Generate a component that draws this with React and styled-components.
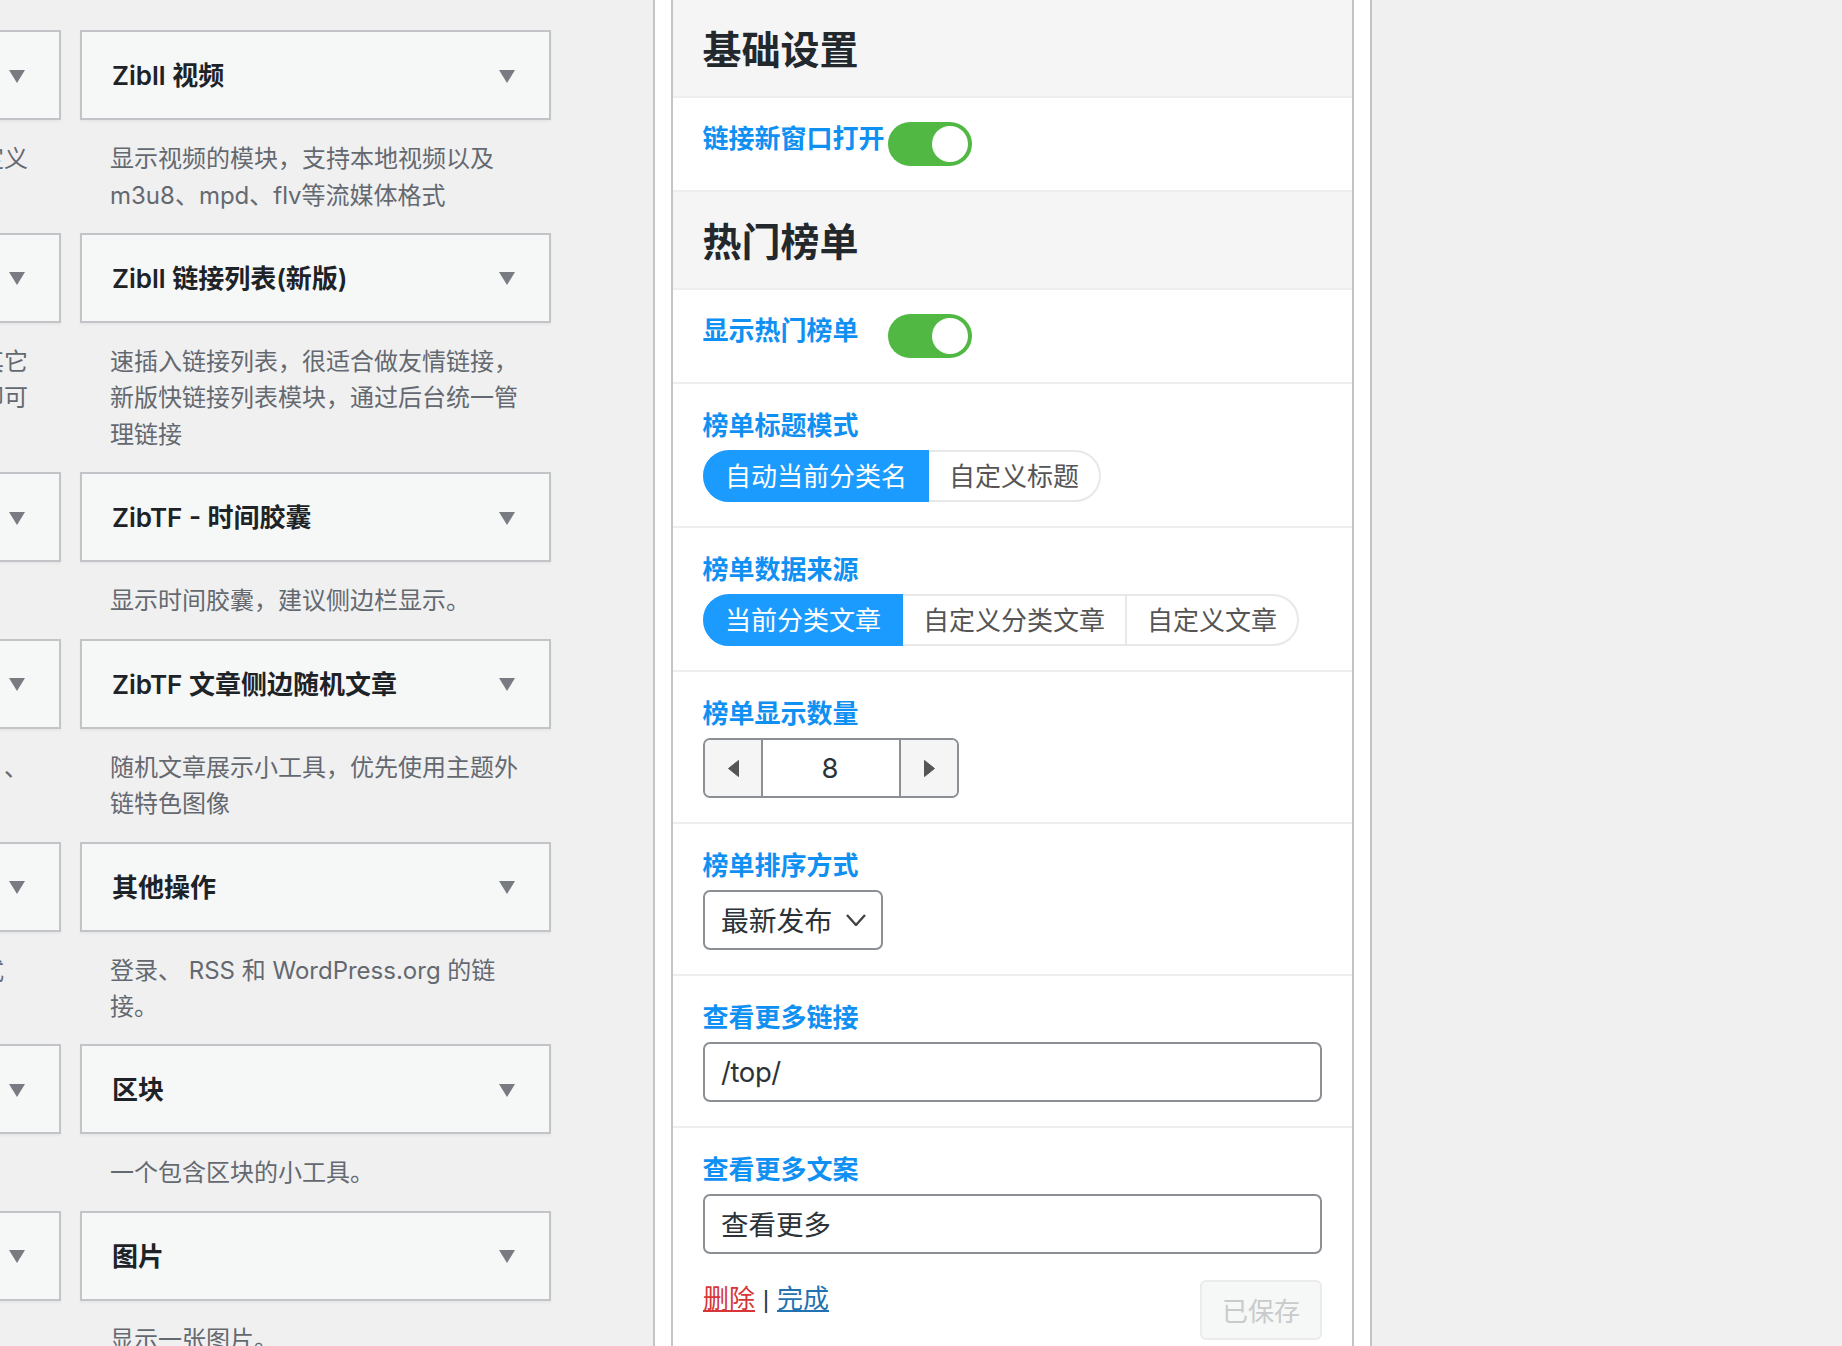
import React from "react";
import styled, { createGlobalStyle } from "styled-components";

const FONT = `Inter, "Noto Sans CJK SC", "Noto Sans", sans-serif`;

const Global = createGlobalStyle`
  html, body { margin: 0; padding: 0; background: #f0f0f1; }
  body { font-family: ${FONT}; }
  * { box-sizing: border-box; }
`;

const Page = styled.div`
  display: flex;
  width: 1842px;
  height: 1346px;
  overflow: hidden;
  background: #f0f0f1;
`;

const WidgetArea = styled.section`
  flex: 0 0 653px;
  height: 100%;
  overflow: hidden;
  padding-top: 30px;
`;

const WidgetGrid = styled.div`
  display: grid;
  grid-template-columns: 471px 471px;
  column-gap: 19px;
  margin-left: -410px;
  width: 961px;
`;

const WidgetItem = styled.div`
  min-width: 0;
`;

const WidgetCard = styled.div`
  display: flex;
  align-items: center;
  justify-content: space-between;
  height: 90px;
  padding: 0 34px 0 30px;
  background: #f6f7f7;
  border: 2px solid #c3c4c7;
  box-shadow: 0 2px 2px rgba(0, 0, 0, 0.04);
`;

const WidgetTitle = styled.h3`
  margin: 0;
  padding-top: 2px;
  font-size: 26px;
  font-weight: 600;
  line-height: 36px;
  color: #1d2327;
`;

const Caret = styled.span`
  flex: none;
  width: 0;
  height: 0;
  margin-top: 2px;
  border-left: 8.5px solid transparent;
  border-right: 8.5px solid transparent;
  border-top: 13px solid #787c82;
`;

const WidgetDesc = styled.p`
  margin: 21px 0 18.9px;
  min-height: 36.5px;
  padding: 0 30px;
  font-size: 24px;
  line-height: 36.5px;
  color: #646970;
  white-space: pre-wrap;
`;

const ClippedDesc = styled(WidgetDesc)`
  padding: 0 33px 0 0;
  text-align: right;
`;

const Sidebar = styled.aside`
  flex: 0 0 719px;
  height: 100%;
  padding: 0 16px;
  background: #fff;
  border-left: 2px solid #c3c4c7;
  border-right: 2px solid #c3c4c7;
`;

const Panel = styled.div`
  height: 100%;
  overflow: hidden;
  background: #fff;
  border-left: 2px solid #c3c4c7;
  border-right: 2px solid #c3c4c7;
`;

const SectionHeading = styled.h2`
  display: flex;
  align-items: center;
  height: 98px;
  margin: 0;
  padding: 0 30px 3px 29.5px;
  background: #f5f5f5;
  border-bottom: 2px solid #eee;
  font-size: 39px;
  font-weight: 700;
  color: #23282d;
`;

const InlineRow = styled.div`
  display: flex;
  align-items: flex-start;
  height: 94px;
  padding: 24px 30px;
  border-bottom: 2px solid #eee;
`;

const StackRow = styled.div`
  display: flex;
  flex-direction: column;
  align-items: flex-start;
  padding: 23px 30px 0;
  height: ${(p) => p.$height}px;
  border-bottom: 2px solid #eee;
`;

const Label = styled.label`
  margin: 0 0 6px -0.5px;
  font-size: 26px;
  font-weight: 700;
  line-height: 37px;
  color: #0f90f2;
`;

const InlineLabel = styled(Label)`
  flex: 0 0 185px;
  margin: 0 0 0 -0.5px;
  line-height: 34px;
`;

const Toggle = styled.span`
  position: relative;
  flex: none;
  width: 84px;
  height: 44px;
  border-radius: 22px;
  background: #52b844;
`;

const ToggleKnob = styled.span`
  position: absolute;
  top: 4px;
  right: 4px;
  width: 36px;
  height: 36px;
  border-radius: 50%;
  background: #fff;
`;

const ButtonSet = styled.div`
  display: flex;
  height: 52px;
`;

const SetOption = styled.span`
  display: flex;
  align-items: center;
  padding: 0 20px 3px;
  margin-left: -2px;
  font-size: 26px;
  color: ${(p) => (p.$active ? "#fff" : "#555")};
  background: ${(p) => (p.$active ? "#1c9bff" : "#fff")};
  border: 2px solid ${(p) => (p.$active ? "#1c9bff" : "#e8e8e8")};
  position: relative;
  z-index: ${(p) => (p.$active ? 1 : 0)};

  &:first-child {
    margin-left: 0;
    border-radius: 26px 0 0 26px;
  }
  &:last-child {
    border-radius: 0 26px 26px 0;
  }
`;

const Spinner = styled.div`
  display: flex;
  width: 256px;
  height: 60px;
  border: 2px solid #8c8f94;
  border-radius: 7px;
  overflow: hidden;
`;

const SpinButton = styled.span`
  display: flex;
  align-items: center;
  justify-content: center;
  flex: 0 0 58px;
  background: #f5f5f5;
  ${(p) => (p.$side === "left" ? "border-right: 2px solid #8c8f94;" : "border-left: 2px solid #8c8f94;")}
`;

const SpinValue = styled.span`
  flex: 1;
  padding-right: 2px;
  text-align: center;
  font-size: 27.5px;
  line-height: 57px;
  color: #2c3338;
`;

const Select = styled.div`
  display: flex;
  align-items: center;
  justify-content: space-between;
  width: 180px;
  height: 60px;
  padding: 0 15px 3px 16px;
  border: 2px solid #8c8f94;
  border-radius: 7px;
  font-size: 27.8px;
  color: #2c3338;
`;

const SelectChevron = styled.svg`
  flex: none;
  margin-top: 3px;
`;

const Field = styled.div`
  display: flex;
  align-items: center;
  width: 619px;
  height: 60px;
  padding: 0 16px ${(p) => (p.$latin ? "1px" : "3px")};
  border: 2px solid #8c8f94;
  border-radius: 7px;
  font-size: 27.5px;
  letter-spacing: ${(p) => (p.$latin ? "-0.4px" : "0")};
  color: #2c3338;
`;

const Footer = styled.div`
  display: flex;
  align-items: flex-start;
  justify-content: space-between;
  width: 619px;
  margin-top: 26px;
`;

const Links = styled.div`
  font-size: 26px;
  line-height: 38px;
  color: #2c3338;
`;

const LinkSeparator = styled.span`
  margin: 0 8px;
  font-family: "Liberation Sans", sans-serif;
  font-size: 23px;
`;

const LinkText = styled.a`
  color: ${(p) => (p.$danger ? "#d63638" : "#2271b1")};
  text-decoration: underline;
`;

const SaveButton = styled.span`
  display: flex;
  align-items: center;
  justify-content: center;
  width: 122px;
  height: 60px;
  padding-bottom: 2px;
  font-size: 26px;
  color: #c9cacb;
  background: #f6f7f7;
  border: 2px solid #ebebec;
  border-radius: 6px;
`;

const Rest = styled.div`
  flex: 1;
  background: #f0f0f1;
`;

const Widget = ({ title, desc }) => (
  <WidgetItem>
    <WidgetCard>
      <WidgetTitle>{title}</WidgetTitle>
      <Caret />
    </WidgetCard>
    <WidgetDesc>{desc}</WidgetDesc>
  </WidgetItem>
);

const ClippedWidget = ({ lines = "" }) => (
  <WidgetItem>
    <WidgetCard>
      <span />
      <Caret />
    </WidgetCard>
    <ClippedDesc>{lines}</ClippedDesc>
  </WidgetItem>
);

const SpinArrow = ({ dir }) => (
  <svg width="11" height="17" viewBox="0 0 11 17">
    <path
      d={dir === "left" ? "M10.5 0.5V16.5L0.5 8.5Z" : "M0.5 0.5V16.5L10.5 8.5Z"}
      fill="#555"
      stroke="#555"
      strokeLinejoin="round"
    />
  </svg>
);

const rows = [
  ["定义", "Zibll 视频", "显示视频的模块，支持本地视频以及m3u8、mpd、flv等流媒体格式"],
  ["其它\n即可", "Zibll 链接列表(新版)", "速插入链接列表，很适合做友情链接，新版快链接列表模块，通过后台统一管理链接"],
  ["", "ZibTF - 时间胶囊", "显示时间胶囊，建议侧边栏显示。"],
  ["、", "ZibTF 文章侧边随机文章", "随机文章展示小工具，优先使用主题外链特色图像"],
  ["式　", "其他操作", "登录、 RSS 和 WordPress.org 的链接。"],
  ["", "区块", "一个包含区块的小工具。"],
  ["", "图片", "显示一张图片。"],
];

export default function App() {
  return (
    <>
      <Global />
      <Page>
        <WidgetArea>
          <WidgetGrid>
            {rows.map(([clip, title, desc]) => (
              <React.Fragment key={title}>
                <ClippedWidget lines={clip} />
                <Widget title={title} desc={desc} />
              </React.Fragment>
            ))}
          </WidgetGrid>
        </WidgetArea>
        <Sidebar>
          <Panel>
            <SectionHeading>基础设置</SectionHeading>
            <InlineRow>
              <InlineLabel>链接新窗口打开</InlineLabel>
              <Toggle><ToggleKnob /></Toggle>
            </InlineRow>
            <SectionHeading>热门榜单</SectionHeading>
            <InlineRow>
              <InlineLabel>显示热门榜单</InlineLabel>
              <Toggle><ToggleKnob /></Toggle>
            </InlineRow>
            <StackRow $height={144}>
              <Label>榜单标题模式</Label>
              <ButtonSet>
                <SetOption $active>自动当前分类名</SetOption>
                <SetOption>自定义标题</SetOption>
              </ButtonSet>
            </StackRow>
            <StackRow $height={144}>
              <Label>榜单数据来源</Label>
              <ButtonSet>
                <SetOption $active>当前分类文章</SetOption>
                <SetOption>自定义分类文章</SetOption>
                <SetOption>自定义文章</SetOption>
              </ButtonSet>
            </StackRow>
            <StackRow $height={152}>
              <Label>榜单显示数量</Label>
              <Spinner>
                <SpinButton $side="left"><SpinArrow dir="left" /></SpinButton>
                <SpinValue>8</SpinValue>
                <SpinButton $side="right"><SpinArrow dir="right" /></SpinButton>
              </Spinner>
            </StackRow>
            <StackRow $height={152}>
              <Label>榜单排序方式</Label>
              <Select>
                最新发布
                <SelectChevron width="20" height="12" viewBox="0 0 20 12">
                  <path d="M1 1L10 11L19 1" fill="none" stroke="#444" strokeWidth="2.4" />
                </SelectChevron>
              </Select>
            </StackRow>
            <StackRow $height={152}>
              <Label>查看更多链接</Label>
              <Field $latin>/top/</Field>
            </StackRow>
            <StackRow $height={240}>
              <Label>查看更多文案</Label>
              <Field>查看更多</Field>
              <Footer>
                <Links>
                  <LinkText $danger>删除</LinkText>
                  <LinkSeparator>|</LinkSeparator>
                  <LinkText>完成</LinkText>
                </Links>
                <SaveButton>已保存</SaveButton>
              </Footer>
            </StackRow>
          </Panel>
        </Sidebar>
        <Rest />
      </Page>
    </>
  );
}
